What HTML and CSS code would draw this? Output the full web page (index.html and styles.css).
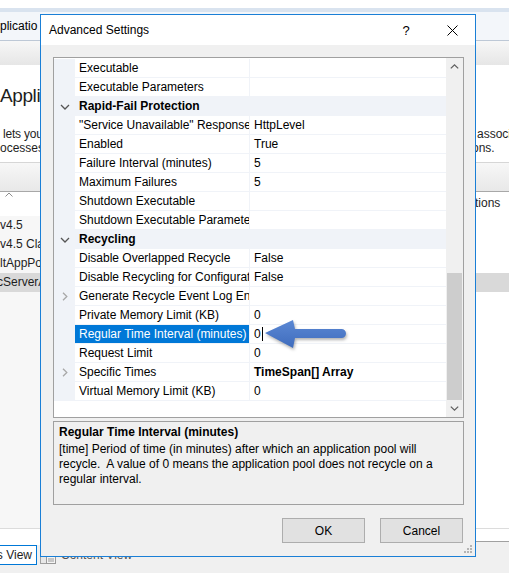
FILE: index.html
```html
<!DOCTYPE html>
<html>
<head>
<meta charset="utf-8">
<title>Advanced Settings</title>
<link rel="stylesheet" href="styles.css">
</head>
<body>
<div class="app">
  <div class="topgap"></div>
  <div class="band"></div>
  <div class="tabstrip"><div class="crumb"><span>plicatio</span></div></div>
  <div class="toolbar"></div>
  <div class="intro split">
    <div class="pane-l">
      <div class="page-title">Appli</div>
      <div class="intro-lines">
        <div class="ind">lets you</div>
        <div>ocesses,</div>
      </div>
    </div>
    <div class="pane-r">
      <div class="intro-lines">
        <div class="r1">associ</div>
        <div class="r2">ons.</div>
      </div>
    </div>
  </div>
  <div class="filterbar"></div>
  <div class="listhead split">
    <div class="pane-l"><svg class="sort" width="8" height="5" viewBox="0 0 8 5"><path d="M0.5 4.5 L4 1 L7.5 4.5" fill="none" stroke="#8c8c8c" stroke-width="1"/></svg></div>
    <div class="pane-r"><div class="colhead">tions</div></div>
  </div>
  <div class="listbody split">
    <div class="pane-l list-l">
      <div class="li">v4.5</div>
      <div class="li">v4.5 Clas</div>
      <div class="li">ltAppPo</div>
      <div class="li sel"><span class="cut">cServerA</span></div>
    </div>
    <div class="pane-r list-r">
      <div class="li"></div>
      <div class="li"></div>
      <div class="li"></div>
      <div class="li sel"></div>
    </div>
  </div>
  <div class="bottom">
    <div class="bottom-l"><div class="viewtab"><span>s View</span></div></div>
    <div class="bottom-r">
      <svg class="cv-icon" width="16" height="11" viewBox="0 0 16 11"><rect x="0.5" y="0.5" width="9" height="10" fill="#e8e8e8" stroke="#a0a0a0"/><rect x="6.5" y="3.5" width="9" height="7" fill="#f4f4f4" stroke="#9a9a9a"/><path d="M8 6h6M8 8h6" stroke="#9a9a9a"/></svg>
      <span class="cv-text">Content View</span>
    </div>
  </div>
</div>

<div class="dialog">
  <div class="titlebar">
    <div class="title">Advanced Settings</div>
    <div class="tb-btn help">?</div>
    <div class="tb-btn close"><svg width="11" height="11" viewBox="0 0 11 11"><path d="M0.5 0.5 L10.5 10.5 M10.5 0.5 L0.5 10.5" stroke="#000" stroke-width="1"/></svg></div>
  </div>
  <div class="dbody">
    <div class="grid">
      <div class="rows">
        <div class="row"><div class="gut"></div><div class="name">Executable</div><div class="val"></div></div>
        <div class="row"><div class="gut"></div><div class="name">Executable Parameters</div><div class="val"></div></div>
        <div class="row cat"><div class="gut"><svg width="10" height="6" viewBox="0 0 10 6"><path d="M1 1 L5 5 L9 1" fill="none" stroke="#555" stroke-width="1.3"/></svg></div><div class="name">Rapid-Fail Protection</div><div class="val"></div></div>
        <div class="row"><div class="gut"></div><div class="name">"Service Unavailable" Response T</div><div class="val">HttpLevel</div></div>
        <div class="row"><div class="gut"></div><div class="name">Enabled</div><div class="val">True</div></div>
        <div class="row"><div class="gut"></div><div class="name">Failure Interval (minutes)</div><div class="val">5</div></div>
        <div class="row"><div class="gut"></div><div class="name">Maximum Failures</div><div class="val">5</div></div>
        <div class="row"><div class="gut"></div><div class="name">Shutdown Executable</div><div class="val"></div></div>
        <div class="row"><div class="gut"></div><div class="name">Shutdown Executable Parameter</div><div class="val"></div></div>
        <div class="row cat"><div class="gut"><svg width="10" height="6" viewBox="0 0 10 6"><path d="M1 1 L5 5 L9 1" fill="none" stroke="#555" stroke-width="1.3"/></svg></div><div class="name">Recycling</div><div class="val"></div></div>
        <div class="row"><div class="gut"></div><div class="name">Disable Overlapped Recycle</div><div class="val">False</div></div>
        <div class="row"><div class="gut"></div><div class="name">Disable Recycling for Configurat</div><div class="val">False</div></div>
        <div class="row"><div class="gut"><svg width="6" height="9" viewBox="0 0 6 9"><path d="M1 0.8 L4.8 4.5 L1 8.2" fill="none" stroke="#a8a8a8" stroke-width="1.3"/></svg></div><div class="name">Generate Recycle Event Log Entr</div><div class="val"></div></div>
        <div class="row"><div class="gut"></div><div class="name">Private Memory Limit (KB)</div><div class="val">0</div></div>
        <div class="row sel"><div class="gut"></div><div class="name">Regular Time Interval (minutes)</div><div class="val">0<span class="caret"></span></div></div>
        <div class="row"><div class="gut"></div><div class="name">Request Limit</div><div class="val">0</div></div>
        <div class="row"><div class="gut"><svg width="6" height="9" viewBox="0 0 6 9"><path d="M1 0.8 L4.8 4.5 L1 8.2" fill="none" stroke="#a8a8a8" stroke-width="1.3"/></svg></div><div class="name">Specific Times</div><div class="val bold">TimeSpan[] Array</div></div>
        <div class="row"><div class="gut"></div><div class="name">Virtual Memory Limit (KB)</div><div class="val">0</div></div>
      </div>
      <div class="vscroll">
        <div class="sb-btn"><svg width="9" height="5" viewBox="0 0 9 5"><path d="M0.8 4.4 L4.5 0.9 L8.2 4.4" fill="none" stroke="#606060" stroke-width="1.3"/></svg></div>
        <div class="sb-track"></div>
        <div class="sb-thumb"></div>
        <div class="sb-btn"><svg width="9" height="5" viewBox="0 0 9 5"><path d="M0.8 0.6 L4.5 4.1 L8.2 0.6" fill="none" stroke="#606060" stroke-width="1.3"/></svg></div>
      </div>
    </div>
    <div class="desc">
      <div class="desc-title">Regular Time Interval (minutes)</div>
      <div class="desc-text">[time] Period of time (in minutes) after which an application pool will<br>recycle.&nbsp; A value of 0 means the application pool does not recycle on a<br>regular interval.</div>
    </div>
    <div class="buttons">
      <div class="btn">OK</div>
      <div class="btn">Cancel</div>
    </div>
  </div>
  <svg class="grip" width="9" height="9" viewBox="0 0 9 9" fill="#b4b4b4"><rect x="6" y="0" width="2" height="2"/><rect x="3" y="3" width="2" height="2"/><rect x="6" y="3" width="2" height="2"/><rect x="0" y="6" width="2" height="2"/><rect x="3" y="6" width="2" height="2"/><rect x="6" y="6" width="2" height="2"/></svg>
</div>

<svg class="annot" width="92" height="42" viewBox="0 0 92 42">
  <defs>
    <linearGradient id="ag" x1="0" y1="0" x2="0" y2="1">
      <stop offset="0" stop-color="#5b88d4"/>
      <stop offset="1" stop-color="#3f6cbd"/>
    </linearGradient>
  </defs>
  <path d="M4 18 L32 5 L34 14 L80.5 14 A4.5 4.5 0 0 1 80.5 23 L34 23 L32 33 Z" fill="url(#ag)"/>
</svg>
</body>
</html>
```

FILE: styles.css
```css
* { box-sizing: border-box; }
html, body { margin: 0; padding: 0; }
body {
  width: 509px;
  height: 573px;
  overflow: hidden;
  position: relative;
  background: #fff;
  font-family: "Liberation Sans", Arial, sans-serif;
  font-size: 12px;
  color: #1a1a1a;
}

/* ---------- background window ---------- */
.app { display: flex; flex-direction: column; height: 573px; }
.topgap { height: 8px; background: #fff; }
.band { height: 4px; background: #d9e3ef; }
.tabstrip {
  height: 29px;
  background: #f3f6fa;
  border-bottom: 1px solid #bdc8d6;
  display: flex;
  align-items: center;
}
.crumb { width: 40px; overflow: hidden; display: flex; white-space: nowrap; }
.crumb span { margin-left: 0; color: #000; }
.toolbar { height: 24px; background: linear-gradient(#f7f7f7, #e6e6e6); }

.split { display: flex; justify-content: space-between; }
.pane-l { width: 40px; overflow: hidden; white-space: nowrap; }
.pane-r { width: 33px; overflow: hidden; white-space: nowrap; }

.intro { height: 97px; background: #fff; }
.intro .pane-l { padding-top: 19px; }
.page-title { font-size: 19px; line-height: 23px; letter-spacing: -0.4px; color: #1e1e1e; }
.intro-lines { margin-top: 20px; line-height: 14px; color: #1e1e1e; }
.intro-lines .ind { padding-left: 3px; letter-spacing: -0.2px; }
.intro .pane-r { padding-top: 62px; }
.intro .pane-r .intro-lines { margin-top: 0; }
.r1 { padding-left: 1px; }
.r2 { margin-left: -4px; }

.filterbar {
  height: 29px;
  border-top: 1px solid #d6d6d6;
  background: linear-gradient(#f7f7f7, #e8e8e8);
}
.listhead { height: 25px; border-top: 1px solid #a8a8a8; background: #fff; }
.sort { display: block; margin: 0 0 0 5px; }
.colhead { line-height: 15px; padding-top: 4px; margin-left: -1px; color: #1e1e1e; }

.listbody { height: 313px; border-bottom: 1px solid #dcdcdc; }
.list-l { background: #f7f7f7; }
.list-r { background: #fff; }
.li { height: 19px; line-height: 19px; color: #1e1e1e; }
.li.sel { background: #d9d9d9; }
.cut { margin-left: -3px; }

.bottom { display: flex; height: 44px; }
.bottom-l {
  width: 40px;
  padding-top: 16px;
  background: linear-gradient(#fff 0, #fff 16px, #f0f0f0 16px);
}
.viewtab {
  width: 37px;
  height: 20px;
  border: 1px solid #0078d7;
  border-left: none;
  background: #fff;
  display: flex;
  justify-content: flex-end;
  align-items: center;
  overflow: hidden;
  white-space: nowrap;
  padding-right: 4px;
  color: #1e1e1e;
}
.viewtab span { flex: none; }
.bottom-r {
  flex: 1;
  background: linear-gradient(#fff 0, #fff 12px, #a0a0a0 12px, #a0a0a0 13px, #f0f0f0 13px);
  padding-top: 20px;
  display: flex;
  align-items: flex-start;
}
.cv-icon { display: block; margin: 4px 5px 0 0; }
.cv-text { line-height: 12px; color: #555; }

/* ---------- dialog ---------- */
.dialog {
  position: absolute;
  left: 40px;
  top: 14px;
  width: 436px;
  height: 543px;
  border: 1px solid #1a7fd6;
  background: #f0f0f0;
  display: flex;
  flex-direction: column;
  font-family: "Liberation Sans", Arial, sans-serif;
  font-size: 12px;
  color: #000;
}
.titlebar {
  height: 30px;
  background: #fff;
  display: flex;
  align-items: center;
}
.title { flex: 1; padding-left: 8px; color: #000; }
.tb-btn {
  width: 46px;
  height: 30px;
  display: flex;
  align-items: center;
  justify-content: center;
}
.help { font-size: 13px; padding-top: 1px; }
.close svg { display: block; margin-top: 1px; }

.dbody {
  flex: 1;
  padding: 12px 11px 0 12px;
  display: flex;
  flex-direction: column;
}
.grid {
  height: 361px;
  border: 1px solid #a0a0a0;
  background: #fff;
  display: flex;
}
.rows { flex: 1; padding-top: 1px; background: #fff; }
.row { display: flex; height: 19px; }
.gut {
  width: 21px;
  flex: none;
  background: #f0f3f8;
  display: flex;
  align-items: center;
  justify-content: center;
}
.name {
  width: 175px;
  flex: none;
  border-right: 1px solid #f0f3f8;
  border-bottom: 1px solid #f0f3f8;
  padding-left: 4px;
  line-height: 18px;
  white-space: nowrap;
  overflow: hidden;
}
.val {
  flex: 1;
  border-bottom: 1px solid #f0f3f8;
  padding-left: 4px;
  line-height: 18px;
  white-space: nowrap;
  overflow: hidden;
  display: flex;
  align-items: center;
}
.val.bold { font-weight: bold; }
.cat .name, .cat .val { background: #f0f3f8; font-weight: bold; }
.sel .name { background: #0078d7; color: #fff; }
.caret { display: inline-block; width: 1px; height: 14px; background: #000; margin-left: 1px; }

.vscroll {
  width: 17px;
  flex: none;
  background: #f0f0f0;
  display: flex;
  flex-direction: column;
}
.sb-btn { height: 17px; display: flex; align-items: center; justify-content: center; }
.sb-btn svg { display: block; }
.sb-track { height: 198px; }
.sb-thumb { height: 127px; margin: 0 1px 0 1px; background: #cdcdcd; }

.desc {
  margin-top: 3px;
  height: 84px;
  border: 1px solid #a0a0a0;
  background: #f0f0f0;
  padding: 3px 5px 0 5px;
  line-height: 15px;
}
.desc-title { font-weight: bold; }
.desc-text { margin-top: 2px; white-space: nowrap; }

.buttons {
  margin-top: 13px;
  display: flex;
  justify-content: flex-end;
  gap: 15px;
  padding-right: 1px;
}
.btn {
  width: 83px;
  height: 25px;
  border: 1px solid #adadad;
  background: #e1e1e1;
  display: flex;
  align-items: center;
  justify-content: center;
  color: #000;
}

.grip { position: absolute; right: 2px; bottom: 2px; display: block; }

/* ---------- annotation arrow ---------- */
.annot {
  position: absolute;
  left: 261px;
  top: 315px;
  filter: drop-shadow(1px 2px 1.5px rgba(0, 0, 0, 0.3));
}
```
